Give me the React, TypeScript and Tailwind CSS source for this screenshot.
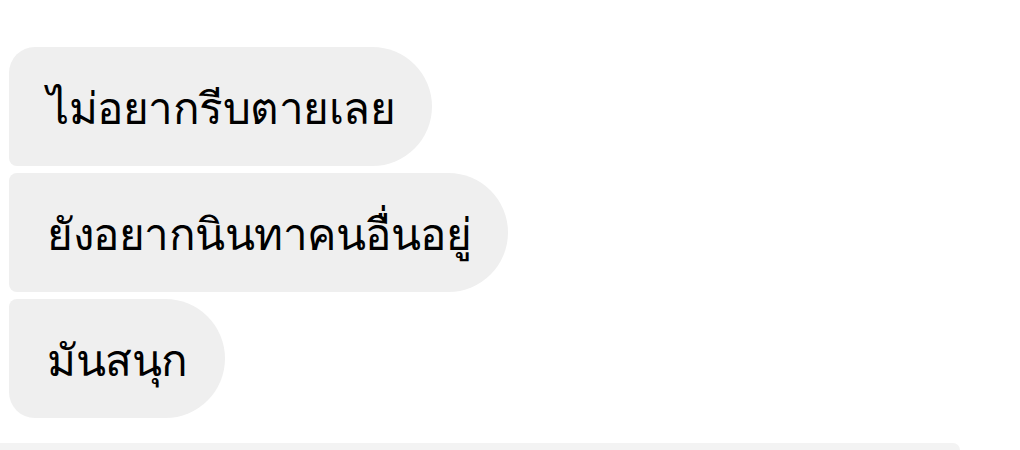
import React from "react";

const bubbleBase =
    "flex h-[119px] items-center bg-[#efefef] pl-[38px] pr-[37px] text-[44px] font-medium leading-none tracking-[-0.5px] text-black";

export default function App() {
    return (
        <div className="flex h-[450px] w-[1020px] flex-col overflow-hidden bg-white font-['Noto_Sans','DejaVu_Sans',sans-serif]">
            <div className="flex flex-col items-start gap-[7px] pl-[9px] pt-[47px]">
                <div className={`${bubbleBase} rounded-tl-[26px] rounded-bl-[8px] rounded-r-[60px]`}>
                    ไม่อยากรีบตายเลย
                </div>
                <div className={`${bubbleBase} rounded-l-[8px] rounded-r-[60px]`}>
                    ยังอยากนินทาคนอื่นอยู่
                </div>
                <div className={`${bubbleBase} rounded-tl-[8px] rounded-bl-[26px] rounded-r-[60px]`}>
                    มันสนุก
                </div>
            </div>
            <div className="mt-[25px] h-[20px] w-[960px] rounded-tr-[60px] bg-[#f3f3f3]"/>
        </div>
    );
}
